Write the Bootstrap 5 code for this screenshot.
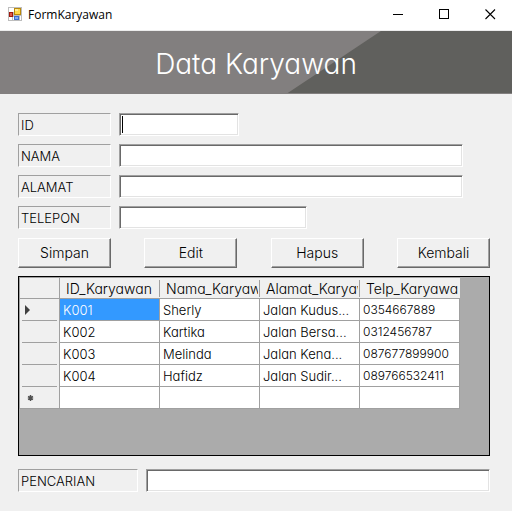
<!DOCTYPE html>
<html lang="id">
<head>
<meta charset="utf-8">
<meta name="viewport" content="width=device-width, initial-scale=1">
<title>FormKaryawan</title>
<link href="https://cdn.jsdelivr.net/npm/bootstrap@5.3.0/dist/css/bootstrap.min.css" rel="stylesheet">
<style>
  body { background: #f0f0f0; color: #000; font: 300 13px/20px "Century Gothic", Inter, "Open Sans", sans-serif; font-feature-settings: "cv11"; }
  .titlebar { height: 31px; background: #fff; border-bottom: 1px solid #ececec; padding-left: 8px; font: 400 12px/30px "Segoe UI", "Open Sans", sans-serif; }
  .titlebar h1 { font: inherit; margin-left: 6px; }
  .app-icon { margin-top: 7px; }
  .win-btn { width: 46px; height: 30px; border: 0; background: none; padding: 0 0 2px 3px; display: flex; align-items: center; justify-content: center; }
  .banner { height: 63px; background: #827f7f; border-bottom: 1px solid #827f7f; }
  .banner::before { content: ""; position: absolute; inset: 0; background: #60605d; clip-path: polygon(74.4% 0, 100% 0, 100% 100%, 56.2% 100%); }
  .banner h2 { font-size: 28px; line-height: 36px; font-weight: 300; color: #fff; padding-top: 3px; }
  .form-area { padding: 19px 22px 19px 18px; }
  .fields { gap: 8px; }
  .tag { width: 93px; height: 23px; padding: 1px 2px; border: 1px solid; border-color: #a0a0a0 #fff #fff #a0a0a0; }
  .tag-wide { width: 120px; }
  .sunken { height: 23px; min-width: 0; padding: 0 2px; background: #fff; border: 1px solid; border-color: #a0a0a0 #fff #fff #a0a0a0; box-shadow: inset 1px 1px #696969, inset -1px -1px #e3e3e3; border-radius: 0; outline: 0; }
  .w-id { width: 120px; caret-color: transparent; background: linear-gradient(#000, #000) 2px 2px / 1px 17px no-repeat #fff; }
  .w-phone { width: 188px; }
  .inset-end { margin-right: 27px; }
  .actions { margin: 9px 0 8px; }
  .raised { width: 93px; height: 30px; padding: 0; font-size: 14px; line-height: 20px; font-weight: 300; color: #000; background: #f0f0f0; border: 1px solid; border-color: #fff #696969 #696969 #fff; box-shadow: inset -1px -1px #a0a0a0; }
  .data-pane { background: #ababab; border: 1px solid #000; margin-bottom: 13px; }
  .records { table-layout: fixed; width: 441px; border-collapse: separate; border-spacing: 0; border: solid #a0a0a0; border-width: 1px 0 0 1px; }
  .records .col-mark { width: 40px; }
  .records .col-data { width: 100px; }
  .records th, .records td { height: 22px; padding: 0 0 0 3px; font-weight: 300; line-height: 20px; white-space: nowrap; overflow: hidden; text-overflow: ellipsis; border: solid #a0a0a0; border-width: 0 1px 1px 0; background: #fff; }
  .records td { padding-right: 6px; }
  .records td:last-child { font-size: 12px; }
  .records thead th { height: 21px; font-size: 14px; line-height: 19px; padding: 0 0 0 6px; text-overflow: clip; background: linear-gradient(#a0a0a0, #a0a0a0) right 0 top 2px / 1px 17px no-repeat #f0f0f0; border-right: 0; }
  .records thead th span { display: block; overflow: hidden; margin-right: 2px; }
  .records thead th:first-child { border-right: 1px solid #a0a0a0; background: #f0f0f0; }
  .records thead th:last-child { background: #f0f0f0; }
  .records tbody th { background: linear-gradient(#a0a0a0, #a0a0a0) 2px 100% / 35px 1px no-repeat #f0f0f0; border-bottom: 0; }
  .records tbody tr:last-child th { background: #f0f0f0; border-bottom: 1px solid #a0a0a0; }
  .records td.picked { background: #3399ff; color: #fff; }
  .records svg { display: block; margin-left: 2px; }
</style>
<script src="https://cdn.jsdelivr.net/npm/bootstrap@5.3.0/dist/js/bootstrap.bundle.min.js"></script>
</head>
<body class="d-flex flex-column min-vh-100">
<header>
  <div class="titlebar d-flex">
    <svg class="app-icon flex-shrink-0" width="14" height="14" viewBox="0 0 14 14" aria-hidden="true" shape-rendering="crispEdges">
      <path fill="#bdbdbd" d="M0 0h14v14H0z"/><path fill="#fff" d="M1 1h5v4H1zM1 10h3v3H1zM5 10h1v3H5zM12 9h1v4h-1z"/>
      <path fill="#9e1a10" d="M1 5h4v5H1z"/><path fill="#e05a4a" d="M2 6h2v3H2z"/>
      <path fill="#b98a0c" d="M6 1h7v7H6z"/><path fill="#ffd84a" d="M7 2h5v5H7z"/><path fill="#ffeb9a" d="M7 2h3v2H7z"/>
      <path fill="#3c6fd0" d="M6 9h5v4H6z"/><path fill="#82aaf5" d="M7 10h3v2H7z"/>
    </svg>
    <h1 class="mb-0 flex-grow-1">FormKaryawan</h1>
    <button class="win-btn" type="button" aria-label="Minimize"><svg width="11" height="11" shape-rendering="crispEdges"><path d="M0 5.5h10" stroke="#000"/></svg></button>
    <button class="win-btn" type="button" aria-label="Maximize"><svg width="11" height="11" shape-rendering="crispEdges"><path d="M.5 .5h9v9h-9z" fill="none" stroke="#000"/></svg></button>
    <button class="win-btn" type="button" aria-label="Close"><svg width="11" height="11"><path d="M.5 .5l9.500 9.500M10 .5L.5 10" stroke="#000" stroke-width="1.1"/></svg></button>
  </div>
  <div class="banner position-relative d-flex align-items-center justify-content-center">
    <h2 class="mb-0 position-relative">Data Karyawan</h2>
  </div>
</header>
<main class="form-area d-flex flex-column flex-grow-1">
  <form class="fields d-flex flex-column">
    <div class="d-flex gap-2"><label class="tag" for="id">ID</label><input class="sunken w-id" id="id" type="text" autofocus></div>
    <div class="d-flex gap-2"><label class="tag" for="nama">NAMA</label><input class="sunken flex-fill inset-end" id="nama" type="text"></div>
    <div class="d-flex gap-2"><label class="tag" for="alamat">ALAMAT</label><input class="sunken flex-fill inset-end" id="alamat" type="text"></div>
    <div class="d-flex gap-2"><label class="tag" for="telepon">TELEPON</label><input class="sunken w-phone" id="telepon" type="text"></div>
  </form>
  <div class="actions d-flex justify-content-between">
    <button class="raised" type="button">Simpan</button>
    <button class="raised" type="button">Edit</button>
    <button class="raised" type="button">Hapus</button>
    <button class="raised" type="button">Kembali</button>
  </div>
  <div class="data-pane flex-grow-1 overflow-hidden">
    <table class="records">
      <colgroup><col class="col-mark"><col class="col-data"><col class="col-data"><col class="col-data"><col class="col-data"></colgroup>
      <thead><tr><th></th><th scope="col"><span>ID_Karyawan</span></th><th scope="col"><span>Nama_Karyawan</span></th><th scope="col"><span>Alamat_Karyawan</span></th><th scope="col"><span>Telp_Karyawan</span></th></tr></thead>
      <tbody>
        <tr><th><svg width="6" height="10"><path d="M0 0l5 5-5 5z" fill="#404040"/></svg></th><td class="picked">K001</td><td>Sherly</td><td>Jalan Kudus...</td><td>0354667889</td></tr>
        <tr><th></th><td>K002</td><td>Kartika</td><td>Jalan Bersa...</td><td>0312456787</td></tr>
        <tr><th></th><td>K003</td><td>Melinda</td><td>Jalan Kena...</td><td>087677899900</td></tr>
        <tr><th></th><td>K004</td><td>Hafidz</td><td>Jalan Sudir...</td><td>089766532411</td></tr>
        <tr><th><svg width="11" height="10"><path d="M5.500 2v6M3 3.500l5 3M8 3.500l-5 3" stroke="#505050" stroke-width="1.500"/></svg></th><td></td><td></td><td></td><td></td></tr>
      </tbody>
    </table>
  </div>
  <div class="d-flex gap-2"><label class="tag tag-wide" for="cari">PENCARIAN</label><input class="sunken flex-fill" id="cari" type="text"></div>
</main>
</body>
</html>
